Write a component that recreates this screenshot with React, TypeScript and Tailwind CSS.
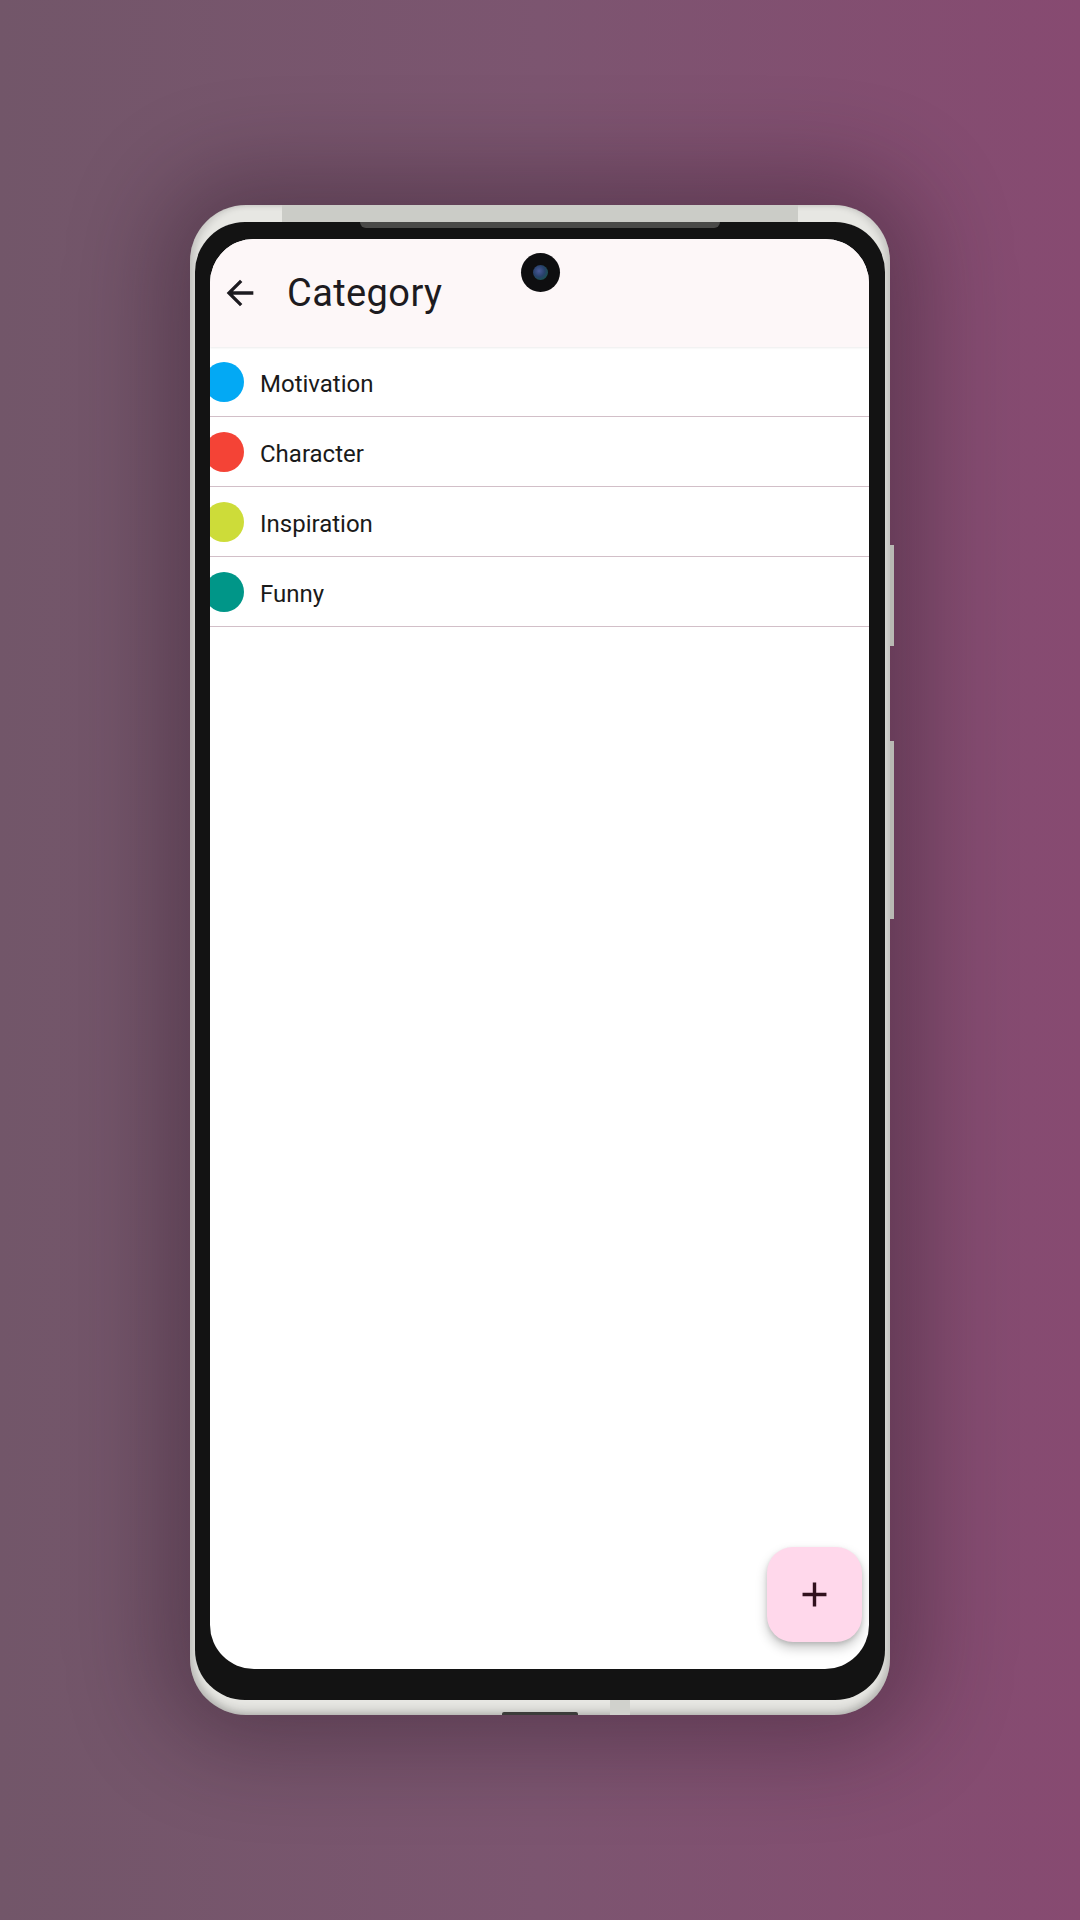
import React from "react";

const items = [
  { name: "Motivation", color: "bg-[#03a9f4]" },
  { name: "Character", color: "bg-[#f44336]" },
  { name: "Inspiration", color: "bg-[#cddc39]" },
  { name: "Funny", color: "bg-[#009688]" },
];

export default function App() {
  return (
    <div className="w-[1080px] h-[1920px] flex items-center justify-center bg-[linear-gradient(90deg,#725669_0%,#7c5570_50%,#874a71_100%)] overflow-hidden">
      {/* phone */}
      <div className="relative w-[700px] h-[1510px] rounded-[56px] bg-[#e7e7e3] shadow-[0_0_90px_30px_rgba(40,20,35,0.38),inset_0_-6px_8px_rgba(0,0,0,0.12),inset_6px_0_6px_rgba(0,0,0,0.10),inset_-6px_0_6px_rgba(0,0,0,0.10)] pt-[17px] px-[5px] pb-[15px] flex">
        {/* top band */}
        <div className="absolute left-[92px] top-0 w-[516px] h-[17px] bg-[#cbccc7]" />
        {/* side buttons */}
        <div className="absolute right-[-4px] top-[340px] w-[4px] h-[101px] bg-[#b8b9b3]" />
        <div className="absolute right-[-4px] top-[536px] w-[4px] h-[178px] bg-[#b8b9b3]" />
        {/* bottom items */}
        <div className="absolute left-[312px] bottom-0 w-[76px] h-[3px] rounded-t-[2px] bg-[#3c3c3a]" />
        <div className="absolute left-[420px] bottom-0 w-[20px] h-[16px] bg-[#d0d1cc]" />
        {/* bezel */}
        <div className="relative flex-1 rounded-[50px] bg-[#131313] pt-[17px] pl-[15px] pr-[16px] pb-[31px] flex">
          {/* notch bar */}
          <div className="absolute left-[165px] top-0 w-[360px] h-[6px] rounded-b-[6px] bg-[#4a4a48]" />
          {/* screen */}
          <div className="relative flex-1 rounded-[44px] bg-white overflow-hidden flex flex-col">
            {/* app bar */}
            <div className="h-[108px] bg-[#fdf7f8] flex items-center shadow-[0_1px_2px_rgba(0,0,0,0.08)] relative z-10">
              <svg viewBox="0 0 24 24" className="w-[40px] h-[40px] ml-[10px] mb-[1px]" fill="#1d1b20">
                <path d="M20 11H7.83l5.59-5.59L12 4l-8 8 8 8 1.41-1.41L7.83 13H20v-2z" />
              </svg>
              <span className="ml-[27px] text-[38px] tracking-[0.4px] text-[#1d1b20] leading-none" style={{ fontFamily: "Roboto, sans-serif" }}>
                Category
              </span>
            </div>
            {/* camera */}
            <div className="absolute left-[311px] top-[14px] w-[39px] h-[39px] rounded-full bg-[#0e0e10] flex items-center justify-center z-20">
              <div className="w-[15px] h-[15px] rounded-full bg-[radial-gradient(circle_at_40%_40%,#4a5a98_0%,#27406a_45%,#1c4e52_70%,#121216_100%)]" />
            </div>
            {/* list */}
            <div className="flex flex-col">
              {items.map((it) => (
                <div key={it.name} className="h-[70px] border-b border-[#d2bfc8] flex items-center">
                  <div className={`w-[40px] h-[40px] rounded-full ml-[-6px] shrink-0 ${it.color}`} />
                  <span className="ml-[16px] mt-[4px] text-[24px] text-[#1a1a1a] leading-none" style={{ fontFamily: "Roboto, sans-serif" }}>
                    {it.name}
                  </span>
                </div>
              ))}
            </div>
            {/* FAB */}
            <div className="absolute right-[7px] bottom-[27px] w-[95px] h-[95px] rounded-[26px] bg-[#ffd8eb] shadow-[0_6px_12px_rgba(0,0,0,0.22),0_2px_4px_rgba(0,0,0,0.12)] flex items-center justify-center">
              <svg viewBox="0 0 24 24" className="w-[41px] h-[41px]" fill="#31111d">
                <path d="M19 13h-6v6h-2v-6H5v-2h6V5h2v6h6v2z" />
              </svg>
            </div>
          </div>
        </div>
      </div>
    </div>
  );
}
